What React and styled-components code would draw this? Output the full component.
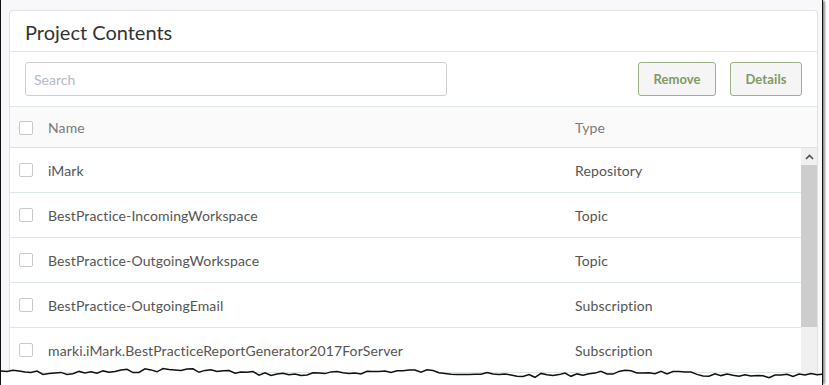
import React from "react";
import styled, { createGlobalStyle } from "styled-components";

const Global = createGlobalStyle`
  html, body { margin: 0; padding: 0; background: #ffffff; }
  body { font-family: Lato, "Open Sans", sans-serif; }
`;

const Frame = styled.div`
  position: relative;
  width: 823px;
  height: 385px;
  overflow: hidden;
  background: #f8f8fa;
  border-left: 1px solid #111;
  border-right: 1px solid #111;
  box-shadow: 3px 0 2px -1px rgba(0, 0, 0, 0.45);
  padding: 10px 4px 0 8px;
  box-sizing: border-box;
`;

const Card = styled.div`
  background: #fff;
  border: 1px solid #e1e3e3;
  border-bottom: none;
  border-radius: 4px 4px 0 0;
  height: 100%;
  display: flex;
  flex-direction: column;
`;

const Header = styled.div`
  height: 41px;
  border-bottom: 1px solid #e3e6e6;
  display: flex;
  align-items: center;
  padding: 1px 15px 0;
  box-sizing: border-box;
`;

const Title = styled.h2`
  margin: 0;
  font-family: Lato, sans-serif;
  font-weight: 400;
  font-size: 20px;
  color: #333;
`;

const Toolbar = styled.div`
  display: flex;
  align-items: center;
  padding: 10px 15px;
  height: 55px;
  box-sizing: border-box;
  border-bottom: 1px solid #dfe7e7;
`;

const SearchInput = styled.input`
  width: 422px;
  height: 34px;
  box-sizing: border-box;
  border: 1px solid #cfcfcf;
  border-radius: 3px;
  padding: 0 8px;
  font-family: Lato, sans-serif;
  font-size: 14px;
  color: #555;
  outline: none;
  &::placeholder { color: #b4bac8; }
`;

const Spacer = styled.div`
  flex: 1;
`;

const Button = styled.button`
  height: 34px;
  width: ${(p) => p.$w}px;
  margin-left: ${(p) => p.$ml || 0}px;
  box-sizing: border-box;
  background: #f5f5f5;
  border: 1px solid #9ab284;
  border-radius: 3px;
  font-family: Lato, sans-serif;
  font-weight: 700;
  font-size: 13px;
  letter-spacing: 0.1px;
  color: #7f9a63;
  padding: 0;
`;

const HeadRow = styled.div`
  display: flex;
  align-items: center;
  height: 41px;
  padding-top: 1px;
  background: #fafafa;
  border-bottom: 1px solid #dde2e2;
  box-sizing: border-box;
  font-size: 14px;
  letter-spacing: 0.12px;
  color: #7a7a7a;
`;

const BodyWrap = styled.div`
  display: flex;
  flex: 1;
  min-height: 0;
`;

const Rows = styled.div`
  flex: 1;
`;

const Row = styled.div`
  display: flex;
  align-items: center;
  height: 45px;
  border-bottom: 1px solid #dde6e6;
  box-sizing: border-box;
  font-size: 14px;
  letter-spacing: 0.12px;
  color: #555;
`;

const Check = styled.span`
  width: 14px;
  height: 14px;
  margin-left: 9px;
  border: 1px solid #c9c9c9;
  border-radius: 2px;
  box-sizing: border-box;
  background: #fff;
  flex: none;
`;

const NameCell = styled.div`
  width: 527px;
  padding-left: 15px;
  white-space: nowrap;
`;

const TypeCell = styled.div`
  white-space: nowrap;
`;

const Scrollbar = styled.div`
  width: 16px;
  background: #f0f0f0;
  display: flex;
  flex-direction: column;
`;

const ScrollArrow = styled.div`
  height: 17px;
  display: flex;
  align-items: center;
  justify-content: center;
`;

const ScrollThumb = styled.div`
  height: 162px;
  background: #cdcdcd;
`;

const Torn = styled.svg`
  position: absolute;
  left: 0;
  bottom: 0;
  width: 829px;
  height: 30px;
`;

const items = [
  ["iMark", "Repository"],
  ["BestPractice-IncomingWorkspace", "Topic"],
  ["BestPractice-OutgoingWorkspace", "Topic"],
  ["BestPractice-OutgoingEmail", "Subscription"],
  ["marki.iMark.BestPracticeReportGenerator2017ForServer", "Subscription"],
];

function tornPath() {
  let seed = 7;
  const rnd = () => {
    seed = (seed * 9301 + 49297) % 233280;
    return seed / 233280;
  };
  const pts = [];
  for (let x = 0; x <= 830; x += 6) {
    const base = 16 + (x / 830) * 4 + Math.sin(x / 37) * 2;
    pts.push([x, base + (rnd() - 0.5) * 4]);
  }
  return pts;
}

const pts = tornPath();
const line = pts.map((p, i) => `${i ? "L" : "M"}${p[0]},${p[1].toFixed(1)}`).join(" ");
const fill = `${line} L830,30 L0,30 Z`;

export default function App() {
  return (
    <>
      <Global />
      <Frame>
        <Card>
          <Header>
            <Title>Project Contents</Title>
          </Header>
          <Toolbar>
            <SearchInput placeholder="Search" />
            <Spacer />
            <Button $w={78}>Remove</Button>
            <Button $w={72} $ml={14}>Details</Button>
          </Toolbar>
          <HeadRow>
            <Check />
            <NameCell>Name</NameCell>
            <TypeCell>Type</TypeCell>
          </HeadRow>
          <BodyWrap>
            <Rows>
              {items.map(([n, t]) => (
                <Row key={n}>
                  <Check />
                  <NameCell>{n}</NameCell>
                  <TypeCell>{t}</TypeCell>
                </Row>
              ))}
            </Rows>
            <Scrollbar>
              <ScrollArrow>
                <svg width="9" height="6" viewBox="0 0 9 6">
                  <path d="M1 5 L4.5 1.5 L8 5" fill="none" stroke="#505050" strokeWidth="1.6" />
                </svg>
              </ScrollArrow>
              <ScrollThumb />
            </Scrollbar>
          </BodyWrap>
        </Card>
        <Torn viewBox="0 0 829 30" preserveAspectRatio="none">
          <path d={fill} transform="translate(1.5,2)" fill="#8a8a8a" opacity="0.7" />
          <path d={fill} fill="#ffffff" />
          <path d={line} fill="none" stroke="#111" strokeWidth="1.5" />
        </Torn>
      </Frame>
    </>
  );
}
